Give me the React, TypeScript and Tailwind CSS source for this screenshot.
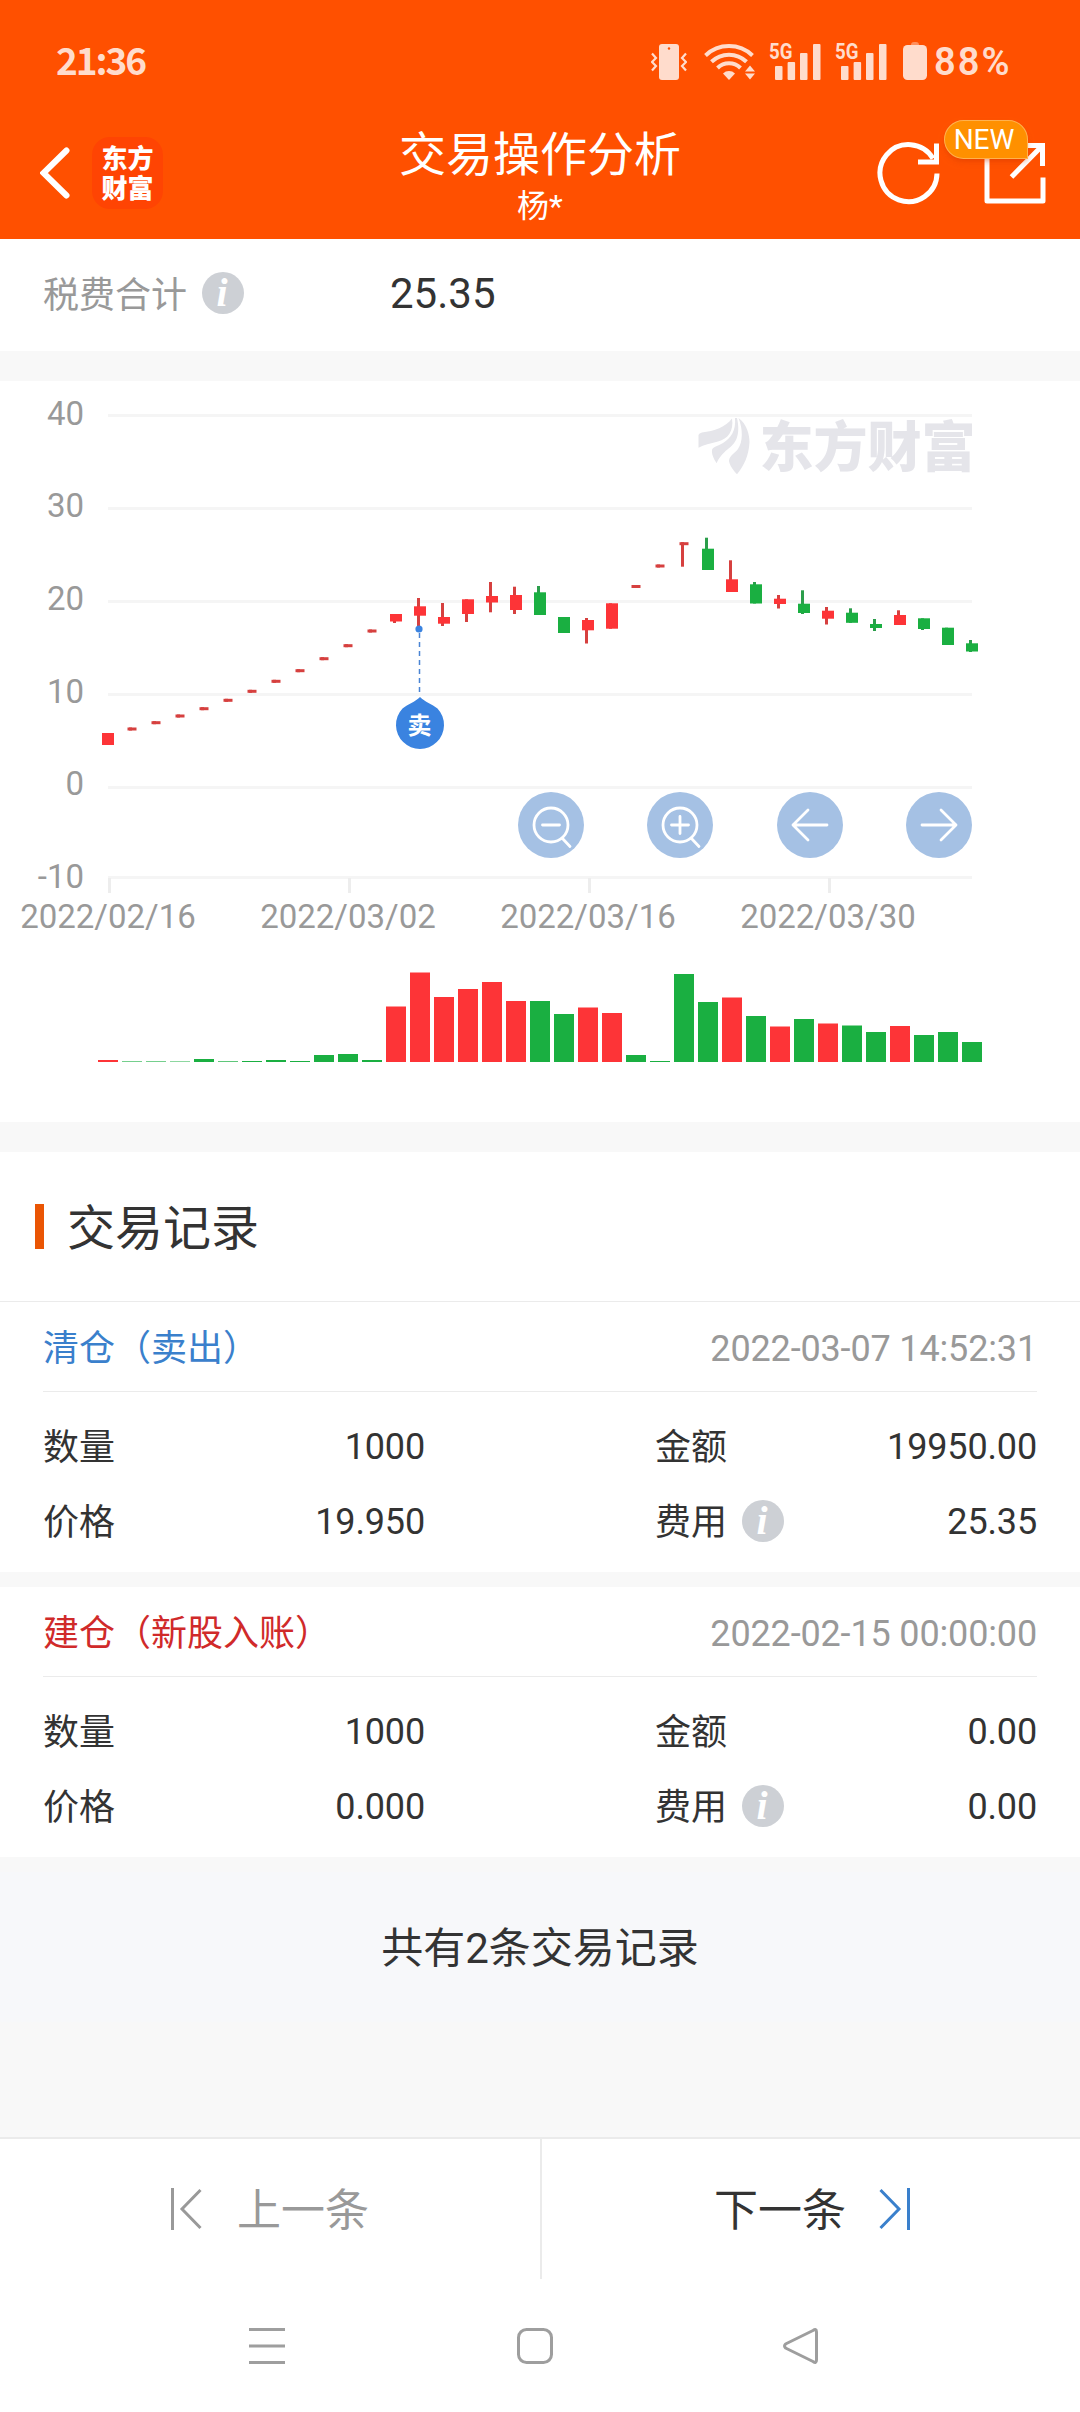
import { ReactNode } from "react";

type Candle = {
  up: boolean;
  top: number;
  bottom: number;
  high?: number;
  low?: number;
  flat?: boolean;
};

const RED = "#fd3437";
const GREEN = "#1aaf41";

const flat = (y: number, low?: number): Candle => ({
  up: true,
  top: y - 1.5,
  bottom: y + 1.5,
  low,
  flat: true,
});
const up = (top: number, bottom: number, high?: number, low?: number): Candle => ({
  up: true,
  top,
  bottom,
  high,
  low,
});
const down = (top: number, bottom: number, high?: number, low?: number): Candle => ({
  up: false,
  top,
  bottom,
  high,
  low,
});

const candles: Candle[] = [
  up(352, 364),
  flat(348),
  flat(341.7),
  flat(335),
  flat(327.7),
  flat(319.3),
  flat(310.3),
  flat(300.3),
  flat(289.7),
  flat(277.7),
  flat(264.7),
  flat(250),
  up(233, 240.5, undefined, 242),
  up(225.3, 234.7, 217, 245),
  up(236, 242.7, 222, 245),
  up(218.3, 233, undefined, 241),
  up(215, 221.5, 201, 231.3),
  up(214, 229, 205.7, 233),
  down(211.3, 234, 205),
  down(236, 252),
  up(239, 249.3, 237, 262.5),
  up(222.3, 247.7),
  flat(205.5),
  flat(185),
  flat(162.7, 185.7),
  down(167.7, 189, 156.7),
  up(198.3, 211, 179.3),
  down(203.3, 222.5, 201),
  up(217.7, 223, 214, 227.5),
  down(222.7, 232, 209.3, 233),
  up(229.7, 237.7, 226, 243.5),
  down(231.7, 241.8, 227.3),
  down(243, 247, 238, 250),
  up(234, 244, 229.3),
  down(237.3, 248, undefined, 249),
  down(246.7, 264),
  down(262.3, 270.5, 259, 271),
];

const volumes: [number, string][] = [
  [2, RED],
  [0.6, GREEN],
  [0.6, GREEN],
  [0.5, GREEN],
  [3, GREEN],
  [0.7, GREEN],
  [1, GREEN],
  [2, GREEN],
  [1, GREEN],
  [7, GREEN],
  [8, GREEN],
  [2, GREEN],
  [55.5, RED],
  [89.5, RED],
  [65, RED],
  [73, RED],
  [80, RED],
  [61, RED],
  [61, GREEN],
  [48, GREEN],
  [54.5, RED],
  [49, RED],
  [7, GREEN],
  [1, GREEN],
  [88, GREEN],
  [60, GREEN],
  [64.5, RED],
  [46, GREEN],
  [35.5, RED],
  [43, GREEN],
  [38.5, RED],
  [36.5, GREEN],
  [30, GREEN],
  [36, RED],
  [27, GREEN],
  [30, GREEN],
  [20, GREEN],
];

// label, grid line y, text baseline
const yAxis: [string, number, number][] = [
  ["40", 34.5, 43.5],
  ["30", 127.5, 135.5],
  ["20", 220.5, 228.5],
  ["10", 313.5, 321.5],
  ["0", 406.5, 413.5],
  ["-10", 496.5, 506.5],
];

const xAxis: [string, number][] = [
  ["2022/02/16", 109.5],
  ["2022/03/02", 349.5],
  ["2022/03/16", 589.5],
  ["2022/03/30", 829.5],
];

const VibrateIcon = () => (
  <svg width="36" height="44" viewBox="0 0 36 44" fill="none">
    <rect x="8" y="4" width="20" height="36" rx="3" fill="#ffdccc" />
    <circle cx="18" cy="8.5" r="1.2" fill="#ff5000" />
    <path
      d="M1 13.5l4 4.5-4 4 4 4-4 4.500M35 13.5l-4 4.500 4 4-4 4 4 4.500"
      stroke="#ffdccc"
      strokeWidth="2.2"
    />
  </svg>
);

const WifiIcon = () => (
  <svg width="52" height="44" viewBox="0 0 52 44" fill="none">
    <g stroke="#ffdccc" strokeWidth="4">
      <path d="M1.500 15.500a34 34 0 0 1 47 0" />
      <path d="M7.500 21.800a25 25 0 0 1 35 0" />
      <path d="M13.500 28a16.500 16.500 0 0 1 23 0" />
    </g>
    <path d="M25 40l-6-6.500a8.500 8.500 0 0 1 12 0z" fill="#ffdccc" />
    <path d="M41 31.500l5-6 5 6zM41 33.500l5 6 5-6z" fill="#ffdccc" />
  </svg>
);

const SignalIcon = () => (
  <svg width="52" height="44" viewBox="0 0 52 44" fill="#ffdccc">
    <text
      x="0"
      y="18.500"
      fontSize="22"
      fontWeight="700"
      textLength="23.500"
      lengthAdjust="spacingAndGlyphs"
      className="font-[Roboto,sans-serif]"
    >
      5G
    </text>
    <rect x="6" y="26" width="7.500" height="14" rx="1" />
    <rect x="18.600" y="22" width="7.500" height="18" rx="1" />
    <rect x="31" y="13" width="7.500" height="27" rx="1" />
    <rect x="44" y="4" width="7.500" height="36" rx="1" />
  </svg>
);

const BatteryIcon = () => (
  <svg width="24" height="44" viewBox="0 0 24 44" fill="#ffdccc">
    <path d="M8 5a3 3 0 0 1 3-3h2a3 3 0 0 1 3 3z" opacity="0.45" />
    <rect x="0" y="5" width="24" height="35" rx="4.500" />
  </svg>
);

const StatusBar = () => (
  <div className="flex h-[124px] items-center justify-between pr-[66px] pl-[56px] leading-none text-[#ffdccc]">
    <span className="pb-[5px] text-[37px] font-bold tracking-[-0.055em] font-['Noto_Sans_CJK_SC',sans-serif]">
      21:36
    </span>
    <div className="flex items-center">
      <VibrateIcon />
      <div className="ml-[17px]">
        <WifiIcon />
      </div>
      <div className="ml-[13px]">
        <SignalIcon />
      </div>
      <div className="ml-[14px]">
        <SignalIcon />
      </div>
      <div className="ml-4">
        <BatteryIcon />
      </div>
      <span className="ml-[7px] w-[80px] text-[38px] font-semibold tracking-[2px]">88%</span>
    </div>
  </div>
);

const Header = () => (
  <header className="h-[239px] bg-[#ff5000] text-white">
    <StatusBar />
    <div className="flex h-[115px] items-start justify-between pr-[34px] pl-10">
      <div className="flex w-[294px] items-center pt-[13px]">
        <svg width="30" height="52" viewBox="0 0 30 52" fill="none">
          <path
            d="M26.500 3.500L3.500 26l23 22.500"
            stroke="#fff"
            strokeWidth="6"
            strokeLinecap="round"
          />
        </svg>
        <div className="ml-[22px] flex h-[72px] w-[71px] flex-col items-center justify-center rounded-[18px] bg-[#ff4403] pt-px text-[26px] leading-[30px] font-black">
          <span>东方</span>
          <span>财富</span>
        </div>
      </div>
      <div className="flex flex-col items-center pt-[5px]">
        <h1 className="text-[47px] leading-[52px]">交易操作分析</h1>
        <p className="mt-[7px] text-[32px] leading-9">杨*</p>
      </div>
      <div className="flex w-[300px] justify-end pt-4">
        <svg width="64" height="66" viewBox="876 140 64 66" fill="none">
          <path
            d="M937 173.500A28.500 28.500 0 1 1 933 158.500"
            stroke="#fff"
            strokeWidth="5"
          />
          <path d="M936.500 143.500V162H918" stroke="#fff" strokeWidth="5" />
        </svg>
        <div className="relative ml-[44px]">
          <svg width="62" height="66" viewBox="984 140 62 66" fill="none">
            <g stroke="#fff" strokeWidth="5" strokeLinejoin="round">
              <path d="M1020 145.500H987V201H1043V177.500" />
              <path
                d="M1018 145.500H1042.500V166M1042 146L1011.500 177"
                strokeLinejoin="miter"
              />
            </g>
          </svg>
          <span className="absolute -top-5 -left-[40px] flex h-[39px] w-[84px] items-center justify-center rounded-full rounded-br-[2px] border border-[#ffb14d] bg-[#ff9000] pr-1 text-[28px] leading-none shadow-md shadow-orange-700/30">
            NEW
          </span>
        </div>
      </div>
    </div>
  </header>
);

const InfoIcon = () => (
  <span className="mb-0.5 flex size-[42px] items-center justify-center rounded-full bg-[#cdd0d5] pr-0.5 text-[40px] leading-none font-bold text-white italic font-['Liberation_Serif',serif]">
    i
  </span>
);

const RoundButton = ({ children }: { children: ReactNode }) => (
  <button className="size-[66px] rounded-full bg-[#a5c1e4]">
    <svg
      width="66"
      height="66"
      viewBox="-33 -33 66 66"
      fill="none"
      stroke="#fff"
      strokeWidth="2.800"
      strokeLinecap="round"
      strokeLinejoin="round"
    >
      {children}
    </svg>
  </button>
);

const KLineChart = () => (
  <section className="relative h-[741px] bg-white">
    <svg width="1080" height="741" viewBox="0 0 1080 741">
      {yAxis.map(([label, y, baseline]) => (
        <g key={label}>
          <line x1="108" x2="972" y1={y} y2={y} stroke="#f5f5f5" strokeWidth="3" />
          <text x="84" y={baseline} textAnchor="end" fontSize="33" fill="#999">
            {label}
          </text>
        </g>
      ))}
      {xAxis.map(([label, x]) => (
        <g key={label}>
          <line x1={x} x2={x} y1="497" y2="512" stroke="#ededed" strokeWidth="3" />
          <text x={x - 1.5} y="547" textAnchor="middle" fontSize="33" fill="#999">
            {label}
          </text>
        </g>
      ))}

      {/* watermark */}
      <g fill="#e5e5ea">
        <path d="M698.500 54Q699 52 702 51.500C714 50 726 46 732 37.500 734 50 728 58 718 60.500 710 62.500 704 64 698.500 66.700Z" />
        <path d="M735 37H737C741 55 735 63 728 68 722 73 718 78 716.700 82.300 713 77 711.500 72 712 69 712.500 66 718 65 723 62 731 57 736 50 735 37Z" />
        <path d="M738.500 37C747 43 749.500 54 749.500 61 749 74 744 85 737 93.300 731 87 729 82 729 79.500 730 74 735 72 738 68 743 61 743 48 738.500 37Z" />
        <text
          x="759.500"
          y="86"
          fontSize="54"
          fontWeight="900"
          className="font-['Noto_Sans_CJK_SC',sans-serif]"
        >
          东方财富
        </text>
      </g>

      {candles.map((c, i) => {
        const x = 108 + i * 24;
        const color = c.up ? RED : GREEN;
        const high = c.high ?? c.top;
        const low = c.low ?? c.bottom;
        const w = c.flat ? 9 : 12;
        return (
          <g key={i} fill={c.flat ? "#d6403f" : color}>
            <rect
              x={x - 3}
              y={high}
              width="3"
              height={low - high}
              fill={c.up ? "#d6403f" : "#2b9e4b"}
            />
            <rect
              x={c.flat ? x - 4.500 : x - 6}
              y={c.top}
              width={w}
              height={c.bottom - c.top}
            />
          </g>
        );
      })}

      {/* sell marker */}
      <line
        x1="419.500"
        x2="419.500"
        y1="252"
        y2="314"
        stroke="#4a84d4"
        strokeWidth="1.500"
        strokeDasharray="5 4"
      />
      <circle cx="419" cy="248" r="3.600" fill="#3a83e0" />
      <path
        d="M420 316c5 5 12 7 17.500 11.500A24 24 0 1 1 402.500 327.500C408 323 415 321 420 316z"
        fill="#3a83e0"
      />
      <text
        x="419.500"
        y="353"
        textAnchor="middle"
        fontSize="24"
        fontWeight="700"
        fill="#fff"
      >
        卖
      </text>

      {volumes.map(([h, color], i) => (
        <rect key={i} x={98 + i * 24} y={681 - h} width="20" height={h} fill={color} />
      ))}
    </svg>

    <div className="absolute top-[411px] right-[108px] flex w-[454px] justify-between">
      <RoundButton>
        <circle r="17" />
        <path d="M-8.500 0h17M11.500 13.500l7.500 8" />
      </RoundButton>
      <RoundButton>
        <circle r="17" />
        <path d="M-8.500 0h17M0-8.500v17M11.500 13.500l7.500 8" />
      </RoundButton>
      <RoundButton>
        <path d="M17 0h-34M-2-15L-17 0-2 15" />
      </RoundButton>
      <RoundButton>
        <path d="M-17 0h34M2-15L17 0 2 15" />
      </RoundButton>
    </div>
  </section>
);

interface RecordProps {
  title: string;
  titleClass: string;
  time: string;
  count: string;
  amount: string;
  price: string;
  fee: string;
}

const Row = ({ label, value, info }: { label: string; value: string; info?: boolean }) => (
  <div className="flex h-[75px] w-[382px] items-center">
    <span className="pt-0.5">{label}</span>
    {info && (
      <span className="ml-[15px]">
        <InfoIcon />
      </span>
    )}
    <span className="ml-auto tracking-[-0.15px]">{value}</span>
  </div>
);

const TradeRecord = (props: RecordProps) => (
  <article className="bg-white px-[43px] text-[36px] leading-none text-[#333]">
    <div className="flex h-[90px] items-center justify-between border-b border-[#ebebeb] pt-1">
      <span className={props.titleClass}>{props.title}</span>
      <span className="tracking-[-0.15px] text-[#999]">{props.time}</span>
    </div>
    <div className="flex h-[180px] justify-between pt-[17px]">
      <div>
        <Row label="数量" value={props.count} />
        <Row label="价格" value={props.price} />
      </div>
      <div>
        <Row label="金额" value={props.amount} />
        <Row label="费用" value={props.fee} info />
      </div>
    </div>
  </article>
);

const Pager = () => (
  <div className="flex h-[142px] border-t-2 border-[#ebebeb] bg-white text-[44px] leading-none">
    <button className="flex w-[540px] items-center justify-center gap-[35px] text-[#999]">
      <svg width="31" height="44" viewBox="0 0 31 44" fill="none">
        <path d="M1.500 1v42M29.500 3L11 22l18.500 19" stroke="#999" strokeWidth="3" />
      </svg>
      <span className="pt-[3px]">上一条</span>
    </button>
    <button className="flex flex-1 items-center justify-center gap-[33px] border-l-2 border-[#ebebeb] pl-0.5 text-[#333]">
      <span className="pt-[3px]">下一条</span>
      <svg width="31" height="44" viewBox="0 0 31 44" fill="none">
        <path d="M29.500 1v42M1.500 3L20 22 1.500 41" stroke="#3a80cc" strokeWidth="3" />
      </svg>
    </button>
  </div>
);

const NavBar = () => (
  <nav className="flex h-[133px] items-center bg-white pl-[248px]">
    <svg width="38" height="38" viewBox="0 0 38 38" stroke="#9e9e9e" strokeWidth="3">
      <path d="M1 2.500h36M1 19h36M1 35.500h36" />
    </svg>
    <svg
      className="ml-[230px]"
      width="38"
      height="38"
      viewBox="0 0 38 38"
      fill="none"
      stroke="#9e9e9e"
      strokeWidth="3"
    >
      <rect x="2.500" y="2.500" width="33" height="33" rx="8" />
    </svg>
    <svg
      className="ml-[228px]"
      width="38"
      height="38"
      viewBox="0 0 38 38"
      fill="none"
      stroke="#9e9e9e"
      strokeWidth="3"
      strokeLinejoin="round"
    >
      <path d="M31 3.500Q34.500 1 34.500 5V33Q34.500 37 31 34.500L3.500 21Q1.500 19 3.500 17Z" />
    </svg>
  </nav>
);

export default function App() {
  return (
    <div className="flex h-[2412px] w-[1080px] flex-col overflow-hidden bg-[#f8f8f8] font-[Roboto,'Noto_Sans_CJK_SC',sans-serif]">
      <Header />

      <section className="flex h-28 items-center bg-white px-[43px] pb-[3px] leading-none">
        <div className="flex w-[347px] items-center gap-[15px]">
          <span className="pt-1 text-[36px] text-[#999]">税费合计</span>
          <InfoIcon />
        </div>
        <span className="text-[42px] text-[#333]">25.35</span>
      </section>

      <div className="h-[30px]" />
      <KLineChart />
      <div className="h-[30px]" />

      <section>
        <div className="flex h-[150px] items-center border-b border-[#ebebeb] bg-white pl-[35px]">
          <span className="h-[45px] w-[9px] bg-[#ea5504]" />
          <h2 className="ml-[23px] pt-[5px] text-[48px] leading-none text-[#333]">交易记录</h2>
        </div>
        <TradeRecord
          title="清仓（卖出）"
          titleClass="text-[#3a80cc] pt-px"
          time="2022-03-07 14:52:31"
          count="1000"
          amount="19950.00"
          price="19.950"
          fee="25.35"
        />
        <div className="h-[15px]" />
        <TradeRecord
          title="建仓（新股入账）"
          titleClass="text-[#d02a2a] pt-px"
          time="2022-02-15 00:00:00"
          count="1000"
          amount="0.00"
          price="0.000"
          fee="0.00"
        />
      </section>

      <div className="flex-1 pt-[15px]">
        <p className="bg-[#f7f8fa] pt-[52px] pb-[48px] text-center text-[42px] leading-[50px] text-[#333]">
          共有2条交易记录
        </p>
      </div>

      <Pager />
      <NavBar />
    </div>
  );
}
